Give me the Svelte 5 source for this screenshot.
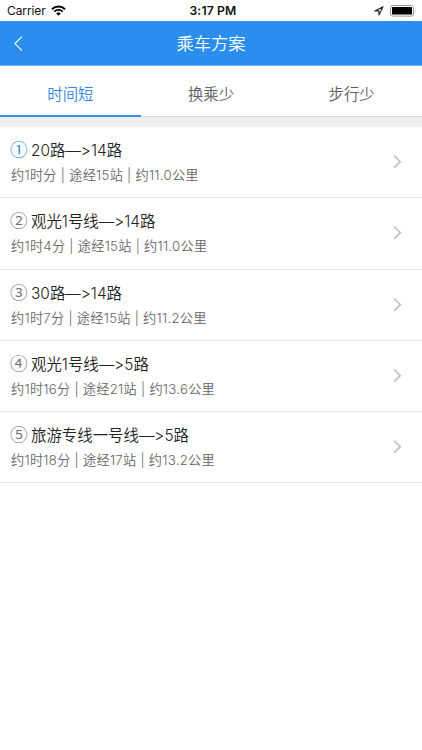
<script>
    const tabs = ['时间短', '换乘少', '步行少'];

    const plans = [
        { no: '①', title: '20路—>14路', detail: '约1时分 | 途经15站 | 约11.0公里' },
        { no: '②', title: '观光1号线—>14路', detail: '约1时4分 | 途经15站 | 约11.0公里' },
        { no: '③', title: '30路—>14路', detail: '约1时7分 | 途经15站 | 约11.2公里' },
        { no: '④', title: '观光1号线—>5路', detail: '约1时16分 | 途经21站 | 约13.6公里' },
        { no: '⑤', title: '旅游专线一号线—>5路', detail: '约1时18分 | 途经17站 | 约13.2公里' }
    ];

    let active = $state(0);
</script>

<div class="page">
    <div class="status">
        <div class="carrier">
            <span>Carrier</span>
            <svg width="15" height="11" viewBox="0 0 15 11">
                <path d="M1 4.2a9.2 9.2 0 0 1 13 0" fill="none" stroke="#000" stroke-width="2" />
                <path d="M3.3 6.6a5.9 5.9 0 0 1 8.4 0" fill="none" stroke="#000" stroke-width="1.8" />
                <path d="M5.2 8.4a3.3 3.3 0 0 1 4.6 0L7.5 10.7z" />
            </svg>
        </div>
        <div class="time">3:17 PM</div>
        <div class="battery">
            <svg width="10" height="10" viewBox="0 0 10 10">
                <path d="M9 .8L.8 4.9h4.1V9z" fill="none" stroke="#222" stroke-width="1.1" stroke-linejoin="round" />
            </svg>
            <svg width="27" height="12" viewBox="0 0 27 12">
                <rect x=".5" y=".5" width="23" height="10.6" rx="2.2" fill="none" stroke="#999" />
                <rect x="2" y="2" width="20" height="7.6" rx=".6" />
                <path d="M24.9 4q1.4 1.8 0 3.6z" fill="#999" />
            </svg>
        </div>
    </div>

    <header class="navbar">
        <button class="back" aria-label="返回">
            <svg width="10" height="16" viewBox="0 0 10 16">
                <path d="M8.9 .6L1.9 7.6l7 7" fill="none" stroke="#fff" stroke-width="1.1" />
            </svg>
        </button>
        <h1>乘车方案</h1>
    </header>

    <nav class="tabs">
        {#each tabs as tab, i}
            <button class="tab" class:active={active === i} onclick={() => (active = i)}>{tab}</button>
        {/each}
    </nav>

    <ul class="plans">
        {#each plans as plan, i}
            <li class="plan">
                <div class="info">
                    <div class="title"><span class="no" class:first={i === 0}>{plan.no}</span><span>{plan.title}</span></div>
                    <div class="detail">{plan.detail}</div>
                </div>
                <svg class="arrow" width="9" height="14" viewBox="0 0 9 14">
                    <path d="M1.2 .7l6 6-6 6" fill="none" stroke="#c4c4c7" stroke-width="1.8" />
                </svg>
            </li>
        {/each}
    </ul>
</div>

<style>
    :global(body) {
        background: #fff;
    }

    .page {
        height: 750px;
        overflow: hidden;
        font-family: Inter, "Noto Sans CJK SC", sans-serif;
        font-feature-settings: "calt" 0;
        color: #333;
    }

    button {
        padding: 0;
        border: none;
        background: none;
        font: inherit;
    }

    .status {
        display: grid;
        grid-template-columns: 1fr 1fr 1fr;
        align-items: center;
        height: 21px;
        padding: 0 5px 0 7px;
        font-size: 12px;
        line-height: 21px;
        color: #111;
        box-sizing: border-box;
    }

    .carrier,
    .battery {
        display: flex;
        align-items: center;
        gap: 5px;
    }

    .carrier span {
        letter-spacing: -0.1px;
    }

    .time {
        padding-left: 2px;
        font-size: 12.2px;
        font-weight: 600;
        letter-spacing: 0.15px;
        text-align: center;
    }

    .battery {
        justify-content: flex-end;
        gap: 6px;
    }

    .navbar {
        display: grid;
        grid-template-columns: 40px 1fr 40px;
        align-items: center;
        height: 45px;
        background: #298eee;
        border-bottom: 1px solid #6fb4f4;
        box-sizing: border-box;
    }

    .back {
        display: flex;
        padding-left: 13px;
    }

    h1 {
        margin: 0;
        color: #fff;
        font-size: 17.3px;
        font-weight: 350;
        line-height: 46px;
        text-align: center;
    }

    .tabs {
        display: flex;
        height: 61px;
        border-bottom: 10px solid #eee;
        box-sizing: border-box;
    }

    .tab {
        flex: 1;
        height: 51px;
        padding-top: 4px;
        border-bottom: 1px solid #d9d9d9;
        box-sizing: border-box;
        font-size: 15.4px;
        font-weight: 350;
        color: #606060;
    }

    .tab.active {
        color: #3089e0;
        border-bottom: 2px solid #3b8fdc;
        padding-top: 5px;
    }

    .plans {
        margin: 0;
        padding: 0;
        list-style: none;
    }

    .plan {
        display: flex;
        align-items: center;
        justify-content: space-between;
        height: 71.3px;
        padding: 0 20px 0 10px;
        border-bottom: 1px solid #e6e6e6;
        box-sizing: border-box;
    }

    .info {
        padding-bottom: 1px;
    }

    .title {
        display: flex;
        align-items: center;
        height: 24px;
        font-size: 15.4px;
        font-weight: 350;
        letter-spacing: 0.03px;
        color: #222;
        white-space: nowrap;
    }

    .no {
        width: 21px;
        padding-bottom: 1px;
        font-family: "Noto Sans CJK SC", sans-serif;
        font-size: 17.6px;
        font-weight: 350;
        color: #707070;
    }

    .no.first {
        color: #3089e0;
    }

    .detail {
        height: 25px;
        padding-left: 1px;
        font-size: 13.2px;
        font-weight: 350;
        letter-spacing: 0.27px;
        line-height: 28px;
        color: #666;
        white-space: nowrap;
    }
</style>
